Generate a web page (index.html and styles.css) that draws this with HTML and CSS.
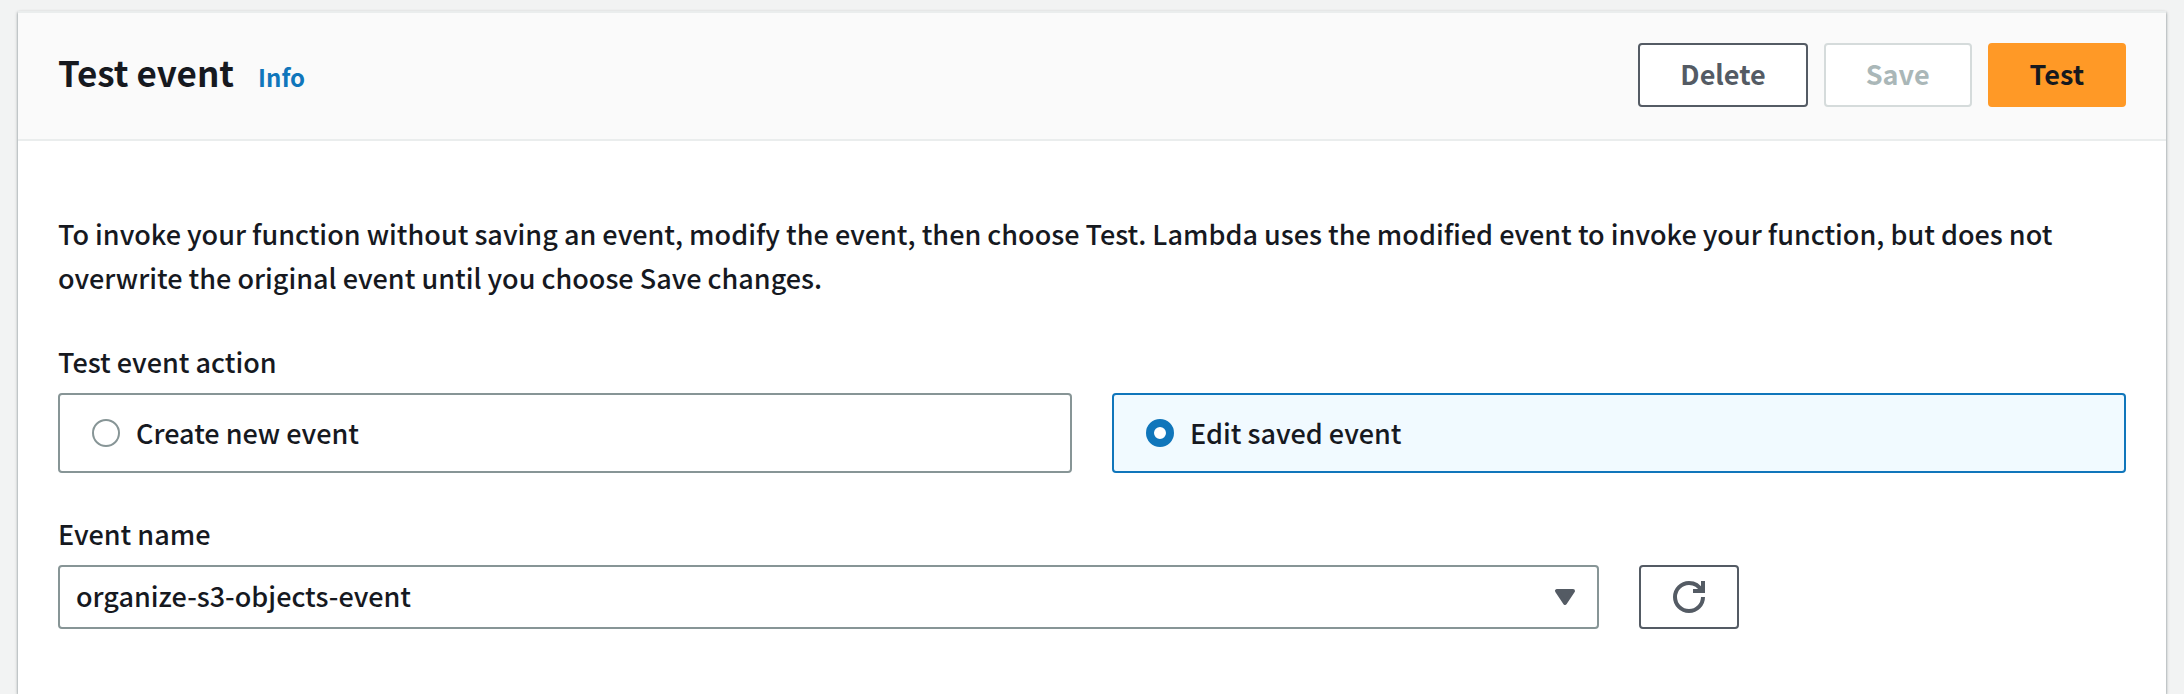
FILE: index.html
```html
<!DOCTYPE html>
<html lang="en">
<head>
<meta charset="utf-8">
<title>Test event</title>
<link rel="stylesheet" href="styles.css">
</head>
<body>
<main class="panel">
  <header class="panel-header">
    <div class="heading">
      <h2 class="title">Test event</h2>
      <a class="info" href="#">Info</a>
    </div>
    <div class="actions">
      <button class="button" type="button">Delete</button>
      <button class="button" type="button" disabled>Save</button>
      <button class="button primary" type="button">Test</button>
    </div>
  </header>
  <form class="panel-body">
    <p class="description">To invoke your function without saving an event, modify the event, then choose Test. Lambda uses the modified event to invoke your function, but does not overwrite the original event until you choose Save changes.</p>
    <fieldset class="field">
      <legend class="label">Test event action</legend>
      <div class="tiles">
        <label class="tile"><input class="radio" type="radio" name="action">Create new event</label>
        <label class="tile"><input class="radio" type="radio" name="action" checked>Edit saved event</label>
      </div>
    </fieldset>
    <div class="field">
      <label class="label" for="event-name">Event name</label>
      <div class="event-row">
        <div class="select-wrap">
          <select class="select" id="event-name">
            <option>organize-s3-objects-event</option>
          </select>
          <svg class="icon caret" viewBox="0 0 16 16" aria-hidden="true"><path d="M4 5h8l-4 6-4-6z"/></svg>
        </div>
        <button class="button refresh" type="button" aria-label="Refresh">
          <svg class="icon" viewBox="0 0 16 16" aria-hidden="true"><path d="M10 5h5V0"/><path d="M15 8c0 3.87-3.13 7-7 7s-7-3.13-7-7 3.13-7 7-7c2.79 0 5.2 1.63 6.33 4"/></svg>
        </button>
      </div>
    </div>
  </form>
</main>
</body>
</html>
```
FILE: styles.css
```css
* {
  box-sizing: border-box;
}

body {
  margin: 0;
  padding: 11px 18px 0;
  background: #f2f3f3;
  color: #16191f;
  font: 500 27px/44px "Noto Sans CJK SC", "Noto Sans", sans-serif;
}

.panel {
  min-height: calc(100vh - 11px);
  background: #fff;
  border-top: 2px solid #eaeded;
  box-shadow: 0 2px 2px rgba(0, 28, 36, 0.3), 1px 1px 3px rgba(0, 28, 36, 0.15), -1px 1px 3px rgba(0, 28, 36, 0.15);
}

.panel-header {
  display: flex;
  justify-content: space-between;
  padding: 30px 40px 32px;
  background: #fafafa;
  border-bottom: 2px solid #eaeded;
}

.heading {
  display: flex;
  align-items: baseline;
  gap: 24px;
}

.title {
  margin: 0;
  font-size: 35px;
  line-height: 58px;
  font-weight: 700;
}

.info {
  color: #1076bb;
  font-size: 24px;
  font-weight: 700;
  text-decoration: none;
}

.actions {
  display: flex;
  gap: 16px;
}

.button {
  height: 64px;
  padding: 0 40px 2px;
  background: #fff;
  border: 2px solid #545b64;
  border-radius: 4px;
  color: #545b64;
  font: inherit;
  font-weight: 700;
}

.button:disabled {
  border-color: #d5dbdb;
  color: #aab7b8;
}

.primary {
  background: #ff9926;
  border-color: #ff9926;
  color: #16191f;
}

.panel-body {
  padding: 71px 40px 40px;
}

.description {
  margin: 0;
}

.field {
  min-width: 0;
  margin: 40px 0 0;
  padding: 0;
  border: 0;
}

.label {
  display: block;
  padding: 0;
  margin-bottom: 9px;
}

.field + .field {
  margin-top: 39px;
}

.tiles {
  display: grid;
  grid-template-columns: 1fr 1fr;
  gap: 40px;
}

.tile {
  display: flex;
  align-items: center;
  gap: 16px;
  height: 80px;
  padding: 0 32px;
  border: 2px solid #879596;
  border-radius: 4px;
}

.tile:has(:checked) {
  background: #f1faff;
  border-color: #1076bb;
}

.radio {
  appearance: none;
  width: 28px;
  height: 28px;
  margin: 0;
  background: #fff;
  border: 2px solid #879596;
  border-radius: 50%;
}

.radio:checked {
  border: 8px solid #1076bb;
}

.event-row {
  display: grid;
  grid-template-columns: repeat(12, 1fr);
  gap: 40px;
}

.select-wrap {
  position: relative;
  grid-column: span 9;
}

.select {
  appearance: none;
  display: block;
  width: 100%;
  height: 64px;
  padding: 0 64px 2px 16px;
  background: #fff;
  border: 2px solid #879596;
  border-radius: 4px;
  color: inherit;
  font: inherit;
}

.icon {
  display: block;
  width: 32px;
  height: 32px;
  fill: none;
  stroke: #545b64;
  stroke-width: 2;
}

.caret {
  position: absolute;
  top: 16px;
  right: 18px;
  fill: #545b64;
  stroke-linejoin: round;
  pointer-events: none;
}

.refresh {
  justify-self: start;
  padding: 0 32px;
}
```
